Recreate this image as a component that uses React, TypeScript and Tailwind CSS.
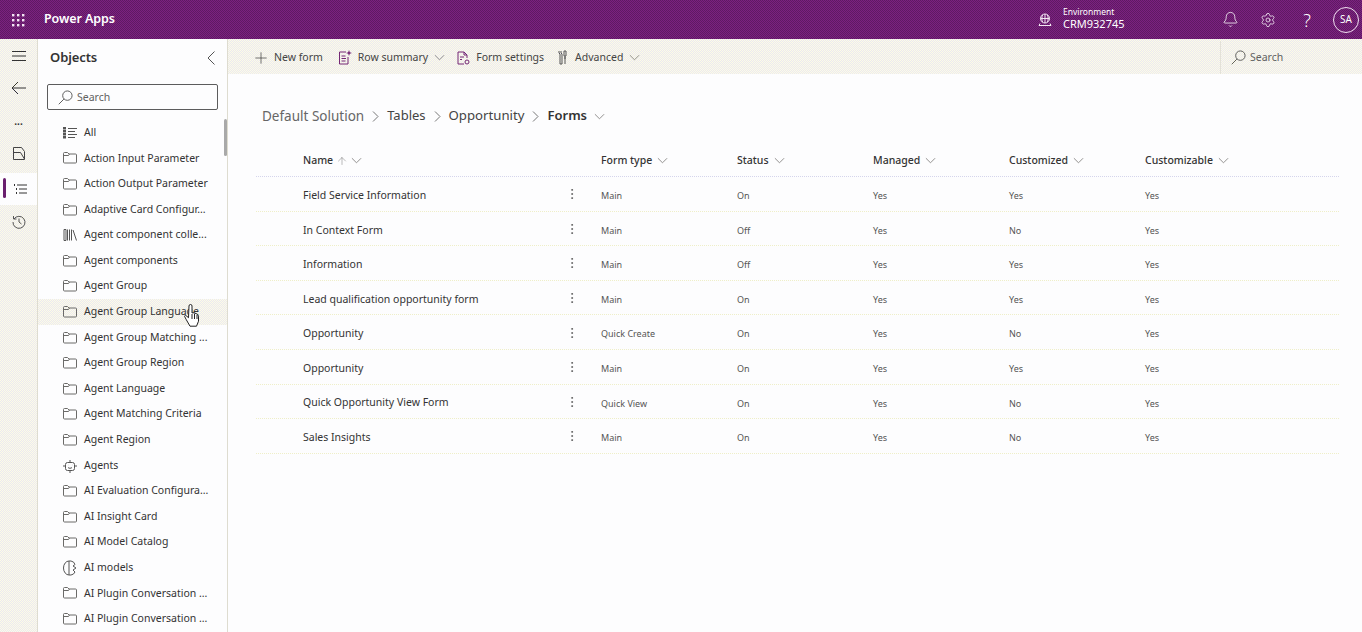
import React from "react";
import { Bell, Settings, MoreVertical, Plus, ArrowUp } from "lucide-react";

const Chev = ({ className = "" }: { className?: string }) => (
  <svg viewBox="0 0 12 7" width="11" height="7" fill="none" stroke="#8a8886" strokeWidth="1" className={className}><path d="M1 1l5 5 5-5" /></svg>
);
const Crumb = () => (
  <svg viewBox="0 0 7 11" width="7" height="11" fill="none" stroke="#777" strokeWidth="1" className="mx-[8px]"><path d="M1 .5l5 5-5 5" /></svg>
);
const SearchIcon = ({ size = 15 }: { size?: number }) => (
  <svg viewBox="0 0 16 16" width={size} height={size} fill="none" stroke="#555" strokeWidth="1"><circle cx="10" cy="6" r="5" /><path d="M6.300 9.700L.8 15.200" /></svg>
);

const Folder = () => (
  <svg width="14" height="12" viewBox="0 0 14 12" fill="none" stroke="#6b6a68" strokeWidth="1"><path d="M.5 10V1.500a1 1 0 0 1 1-1h3l1.500 1.500h6.500a1 1 0 0 1 1 1V10a1 1 0 0 1-1 1h-11a1 1 0 0 1-1-1zM.5 3.500h5L6.500 2" /></svg>
);
const AllIcon = () => (
  <svg width="14" height="12" viewBox="0 0 14 12" fill="none" stroke="#555" strokeWidth="1"><path d="M5 1.500h9M5 4.500h7M5 7.500h9M5 10.500h7" /><path d="M1.500 0v12" strokeWidth="3" strokeDasharray="2.400 .6" /></svg>
);
const Lib = () => (
  <svg width="14" height="12" viewBox="0 0 14 12" fill="none" stroke="#555" strokeWidth="1"><path d="M1 .5h2v11H1zM4.500 .5v11M6.500 .5v11M8.500 .5v11M10 1l3.500 10.500" /></svg>
);
const Bot = () => (
  <svg width="14" height="14" viewBox="0 0 14 14" fill="none" stroke="#555" strokeWidth="1"><rect x="2.500" y="3.500" width="9" height="8" rx="2" /><path d="M7 1v2.500M7 11.500V14M0 7h2.500M11.500 7H14M5 8.500c1 1 3 1 4 0" /><path d="M5 6h.1M9 6h.1" strokeWidth="1.400" /></svg>
);
const Brain = () => (
  <svg width="14" height="16" viewBox="0 0 14 16" fill="none" stroke="#555" strokeWidth="1"><path d="M6 1a5.500 7 0 1 0 0 14zM6 1h2a5 5 0 0 1 4 3.500L10 6l3 2-3 2 2 2a5 5 0 0 1-4 3H6" /></svg>
);

type Kind = "folder" | "all" | "lib" | "bot" | "brain";
const objects: [string, Kind][] = [
  ["All", "all"],
  ["Action Input Parameter", "folder"],
  ["Action Output Parameter", "folder"],
  ["Adaptive Card Configur...", "folder"],
  ["Agent component colle...", "lib"],
  ["Agent components", "folder"],
  ["Agent Group", "folder"],
  ["Agent Group Language", "folder"],
  ["Agent Group Matching ...", "folder"],
  ["Agent Group Region", "folder"],
  ["Agent Language", "folder"],
  ["Agent Matching Criteria", "folder"],
  ["Agent Region", "folder"],
  ["Agents", "bot"],
  ["AI Evaluation Configura...", "folder"],
  ["AI Insight Card", "folder"],
  ["AI Model Catalog", "folder"],
  ["AI models", "brain"],
  ["AI Plugin Conversation ...", "folder"],
  ["AI Plugin Conversation ...", "folder"],
];
const icons: Record<Kind, React.ReactNode> = { folder: <Folder />, all: <AllIcon />, lib: <Lib />, bot: <Bot />, brain: <Brain /> };

const rows = [
  ["Field Service Information", "Main", "On", "Yes", "Yes", "Yes"],
  ["In Context Form", "Main", "Off", "Yes", "No", "Yes"],
  ["Information", "Main", "Off", "Yes", "Yes", "Yes"],
  ["Lead qualification opportunity form", "Main", "On", "Yes", "Yes", "Yes"],
  ["Opportunity", "Quick Create", "On", "Yes", "No", "Yes"],
  ["Opportunity", "Main", "On", "Yes", "Yes", "Yes"],
  ["Quick Opportunity View Form", "Quick View", "On", "Yes", "No", "Yes"],
  ["Sales Insights", "Main", "On", "Yes", "No", "Yes"],
];

const dither = "bg-[repeating-conic-gradient(#fdfce6_0_25%,#ebe9f1_0_50%)] bg-[length:2px_2px]";

export default function App() {
  return (
    <div className="h-[632px] w-[1362px] overflow-hidden bg-[#fdfdfe] font-['Open_Sans','Noto_Sans',sans-serif] text-[#242424] flex flex-col relative">
      <header className="h-[39px] shrink-0 bg-[repeating-conic-gradient(#7c2180_0_25%,#5f1a63_0_50%)] bg-[length:2px_2px] flex items-center text-white">
        <div className="w-[36px] flex justify-center">
          <svg width="14" height="14" viewBox="0 0 14 14" fill="#f3e6f3">
            <g>{[1, 6, 11].flatMap((x) => [1, 6, 11].map((y) => <rect key={x + "-" + y} x={x} y={y} width="2.400" height="2.400" />))}</g>
          </svg>
        </div>
        <span className="ml-[8px] text-[12.5px] font-semibold tracking-[-0.1px]">Power Apps</span>
        <div className="flex-1" />
        <svg width="14" height="14" viewBox="0 0 14 14" fill="none" stroke="#f3e6f3" strokeWidth="1" className="mr-[11px]"><circle cx="7" cy="5.500" r="4.500" /><path d="M2.500 5.500h9M7 1v9M4.500 2c-.8 2-.8 5 0 7M9.500 2c.8 2 .8 5 0 7M1 12.500h12M2 10.500l-1 2M12 10.500l1 2" /></svg>
        <div className="w-[159px] flex flex-col leading-none -mt-[2px]">
          <span className="text-[8.5px] mb-[2px]">Environment</span>
          <span className="text-[11px]">CRM932745</span>
        </div>
        <div className="flex items-center">
          <Bell size={17} strokeWidth={1.100} className="mr-[21px]" />
          <Settings size={16} strokeWidth={1.100} className="mr-[24px]" />
          <span className="text-[18px] font-light w-[14px] mr-[19px] text-center leading-none">?</span>
          <div className="w-[26px] h-[26px] rounded-full border border-[#f0dff0] flex items-center justify-center text-[10px] mr-[3px]">SA</div>
        </div>
      </header>

      <div className="flex flex-1 min-h-0">
        <nav className={"w-[38px] shrink-0 flex flex-col items-center border-r border-[#dedcd0] " + dither}>
          <svg width="14" height="10" viewBox="0 0 14 10" fill="none" stroke="#333" strokeWidth="1" className="mt-[12px]"><path d="M0 .5h14M0 5h14M0 9.500h14" /></svg>
          <svg width="15" height="14" viewBox="0 0 15 14" fill="none" stroke="#333" strokeWidth="1" className="mt-[20px]"><path d="M15 7H1M7 1L1 7l6 6" /></svg>
          <span className="mt-[21px] text-[10px] leading-none font-bold text-[#333]">...</span>
          <svg width="12" height="13" viewBox="0 0 12 13" fill="none" stroke="#444" strokeWidth="1" className="mt-[21px]"><path d="M.5.5h8l3 4v8H.5zM.5 5.500h7L11.500 12" /></svg>
          <div className="relative mt-[13px] w-full h-[32px] flex items-center justify-center bg-[#fdfdfe]">
            <div className="absolute left-[3px] top-[5px] w-[3px] h-[20px] rounded bg-[#6a1f6e]" />
            <svg width="13" height="10" viewBox="0 0 13 10" fill="none" stroke="#333" strokeWidth="1" className="ml-[3px]"><path d="M3 1h10M5 5h8M5 9h8" /><path d="M0 1h1M2 5h1M2 9h1" strokeWidth="2" /></svg>
          </div>
          <svg width="14" height="14" viewBox="0 0 14 14" fill="none" stroke="#555" strokeWidth="1" className="mt-[10px]"><path d="M2 4a6 6 0 1 1-1 3M1.500 1v3h3M7 3.500V7l2.500 2" /></svg>
        </nav>

        <aside className="w-[190px] shrink-0 flex flex-col border-r border-[#dedcd0] relative">
          <div className="h-[36px] flex items-center justify-between pl-[12px] pr-[12px] pt-[2px]">
            <span className="text-[13px] font-semibold text-[#333] tracking-[-0.1px]">Objects</span>
            <svg width="8" height="14" viewBox="0 0 8 14" fill="none" stroke="#555" strokeWidth="1"><path d="M7.500 .5L1 7l6.500 6.500" /></svg>
          </div>
          <div className="ml-[9px] mr-[9px] mt-[9px] h-[26px] flex items-center gap-[4px] border border-[#5c5c5c] rounded-[2px] pl-[10px] pt-[1px] text-[10.5px] text-[#616161]">
            <SearchIcon size={15} />
            <span>Search</span>
          </div>
          <ul className="mt-[10px] flex flex-col">
            {objects.map(([name, kind], i) => (
              <li key={i} className={"h-[25.6px] flex items-center pl-[25px] text-[10.5px] text-[#333] shrink-0 whitespace-nowrap " + (name === "Agent Group Language" ? dither : "")}>
                <span className="w-[21px] flex items-center shrink-0">{icons[kind]}</span>
                <span>{name}</span>
              </li>
            ))}
          </ul>
          <div className="absolute right-0 top-[80px] w-[3px] h-[37px] rounded bg-[#a9a9a9]" />
          <svg width="16" height="24" viewBox="0 0 16 24" className="absolute left-[146px] top-[265px]" fill="#fff" stroke="#222" strokeWidth="1"><path d="M5 2a1.500 1.500 0 0 1 3 0v7l1-.3 2 .5 2.500 1 1 2v5l-2 5H6l-4-7-1.500-3 1-1 3 2.500z" /><path d="M8 10v5M10.500 10v5M13 11v4" /></svg>
        </aside>

        <main className="flex-1 min-w-0 flex flex-col">
          <div className={"h-[35px] shrink-0 flex items-center pt-[2px] text-[10.5px] text-[#444] " + dither}>
            <Plus size={18} strokeWidth={0.900} className="ml-[24px] mr-[4px] text-[#333]" />
            <span>New form</span>
            <svg width="14" height="15" viewBox="0 0 14 15" fill="none" stroke="#742774" strokeWidth="1" className="ml-[15px] mr-[6px]"><path d="M8 2H1.500v12h8.500V7M3.500 6h4M3.500 8.500h4.500M3.500 11h4" /><path d="M11 0l.8 2.200L14 3l-2.200.8L11 6l-.8-2.200L8 3l2.200-.8z" fill="#742774" stroke="none" /></svg>
            <span>Row summary</span>
            <Chev className="ml-[6px] mr-[12px]" />
            <svg width="13" height="14" viewBox="0 0 13 14" fill="none" stroke="#742774" strokeWidth="1" className="mr-[6px]"><path d="M7 13H1V1h6l3 3v3M7 1v3h3M3 6h4M3 8.500h2" /><circle cx="10" cy="11" r="2" /></svg>
            <span>Form settings</span>
            <svg width="10" height="15" viewBox="0 0 10 15" fill="none" stroke="#555" strokeWidth="1" className="ml-[14px] mr-[7px]"><path d="M1 1v2l1 1v10h2V4l-1-1V1M7 14V6M6 1h2v5H6zM6 8h2" /></svg>
            <span>Advanced</span>
            <Chev className="ml-[6px]" />
            <div className="flex-1" />
            <div className="w-[142px] h-full border-l border-[#e3e1d8] flex items-center pl-[10px] gap-[4px] text-[#616161]">
              <SearchIcon size={15} />
              <span>Search</span>
            </div>
          </div>

          <div className="mt-[32px] ml-[34px] flex items-center h-[20px] text-[13.2px] text-[#444]">
            <span className="text-[#666] text-[13.5px]">Default Solution</span>
            <Crumb />
            <span className="text-[13px]">Tables</span>
            <Crumb />
            <span>Opportunity</span>
            <Crumb />
            <span className="font-semibold text-[13px] text-[#333]">Forms</span>
            <Chev className="ml-[7px]" />
          </div>

          <div className="mt-[17px] ml-[28px] mr-[23px]">
            <div className="h-[34px] pt-[2px] grid grid-cols-[47px_298px_136px_136px_136px_136px_1fr] items-center text-[10.5px] font-medium text-[#333] border-b border-dotted border-[#d5d5ec]">
              <span />
              <span className="flex items-center">Name<ArrowUp size={12} strokeWidth={1} className="mx-[3px] text-[#777]" /><Chev /></span>
              {["Form type", "Status", "Managed", "Customized", "Customizable"].map((h) => (
                <span key={h} className="flex items-center gap-[5px]">{h}<Chev /></span>
              ))}
            </div>
            {rows.map((r, i) => (
              <div key={i} className="h-[34.6px] pt-[4px] grid grid-cols-[47px_298px_136px_136px_136px_136px_1fr] items-center border-b border-dotted border-[#efefc8] text-[9px] text-[#555]">
                <span />
                <span className="flex items-center justify-between pr-[22px] text-[10.5px] text-[#333]">
                  {r[0]}
                  <MoreVertical size={14} strokeWidth={1} className="text-[#333] -mt-[3px]" />
                </span>
                {r.slice(1).map((c, j) => <span key={j}>{c}</span>)}
              </div>
            ))}
          </div>
        </main>
      </div>
    </div>
  );
}
